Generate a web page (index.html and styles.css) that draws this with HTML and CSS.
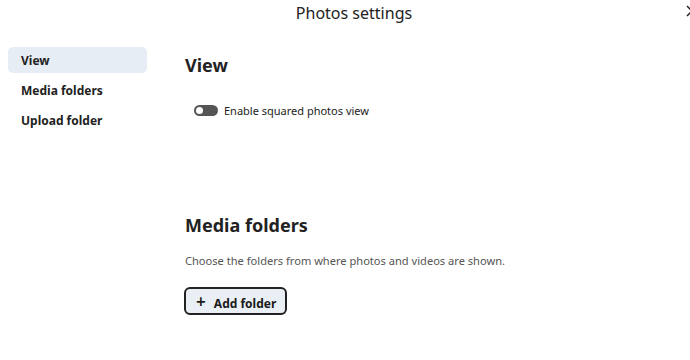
FILE: index.html
```html
<!DOCTYPE html>
<html lang="en">
<head>
    <meta charset="UTF-8">
    <title>Photos settings</title>
    <link rel="stylesheet" href="styles.css">
</head>
<body>
    <div class="dialog">
        <div class="header">
            <h2 class="title">Photos settings</h2>
            <button class="close" aria-label="Close">
                <svg width="12" height="12" viewBox="0 0 12 12"><path d="M1 1 L11 11 M11 1 L1 11" stroke="#222" stroke-width="1.5"/></svg>
            </button>
        </div>
        <div class="body">
            <ul class="nav">
                <li class="nav-item active">View</li>
                <li class="nav-item">Media folders</li>
                <li class="nav-item">Upload folder</li>
            </ul>
            <div class="content">
                <section class="section view-section">
                    <h3>View</h3>
                    <label class="toggle-row">
                        <span class="toggle"><span class="knob"></span></span>
                        Enable squared photos view
                    </label>
                </section>
                <section class="section">
                    <h3>Media folders</h3>
                    <p class="hint">Choose the folders from where photos and videos are shown.</p>
                    <button class="add-button"><span class="plus">+</span> Add folder</button>
                </section>
            </div>
        </div>
    </div>
</body>
</html>
```

FILE: styles.css
```css
body {
    margin: 0;
    font-family: "Noto Sans", "Open Sans", sans-serif;
    background: white;
    color: #222;
}
.dialog {
    width: 690px;
    height: 360px;
    overflow: hidden;
}
.header {
    position: relative;
    height: 30px;
    padding-left: 18px;
    text-align: center;
}
.title {
    margin: 0;
    font-size: 16px;
    font-weight: 400;
    line-height: 26px;
}
.close {
    position: absolute;
    right: -8px;
    top: 5px;
    padding: 0;
    border: none;
    background: none;
}
.body {
    display: flex;
}
.nav {
    list-style: none;
    margin: 17px 0 0 8px;
    padding: 0;
    width: 139px;
}
.nav-item {
    height: 26px;
    line-height: 28px;
    margin-bottom: 4px;
    padding-left: 13px;
    font-size: 12px;
    font-weight: 700;
    border-radius: 5px;
}
.nav-item.active {
    background: #e6edf5;
}
.content {
    margin-left: 38px;
    padding-top: 19px;
}
.section h3 {
    margin: 0;
    font-size: 18px;
    font-weight: 700;
    line-height: 32px;
}
.view-section {
    height: 160px;
}
.toggle-row {
    display: flex;
    align-items: center;
    gap: 6px;
    margin: 22px 0 0 9px;
    font-size: 11px;
}
.toggle {
    position: relative;
    width: 24px;
    height: 11px;
    border-radius: 6px;
    background: #555;
}
.knob {
    position: absolute;
    left: 2px;
    top: 2px;
    width: 7px;
    height: 7px;
    border-radius: 50%;
    background: white;
}
.hint {
    margin: 12px 0 19px;
    font-size: 11.1px;
    color: #555;
}
.add-button {
    height: 28px;
    margin-left: -1px;
    padding: 0 9px 0 10px;
    font-family: inherit;
    font-size: 12px;
    font-weight: 700;
    color: #1a1a1a;
    background: #e9eff5;
    border: 2px solid #222;
    border-radius: 6px;
}
.plus {
    font-weight: 600;
    font-size: 17px;
    margin-right: 5px;
}
```
